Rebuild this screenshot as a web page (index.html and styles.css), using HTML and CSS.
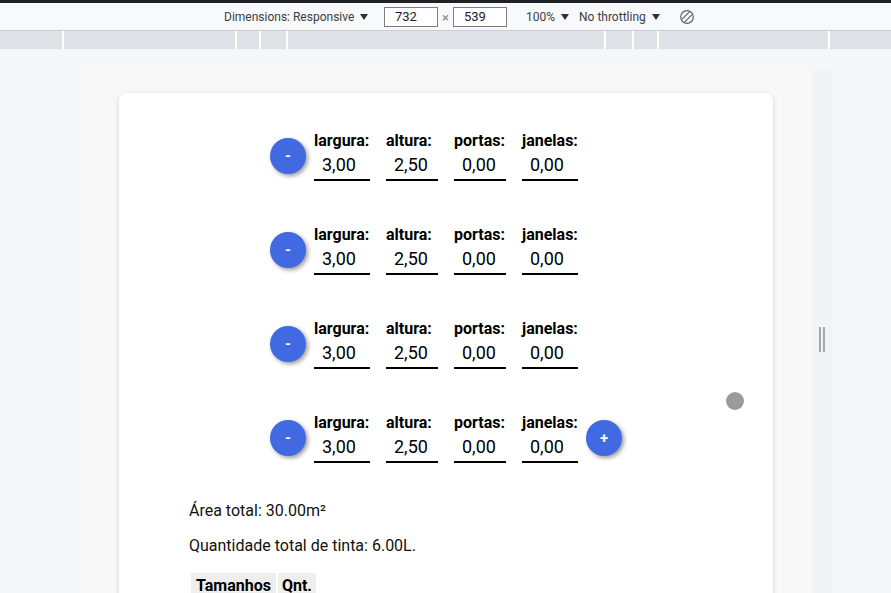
FILE: index.html
```html
<!DOCTYPE html>
<html lang="pt">
<head>
<meta charset="utf-8">
<title>Calculadora de tinta</title>
<link rel="stylesheet" href="styles.css">
</head>
<body>
<div class="topbar"></div>
<div class="toolbar">
  <span class="tb-dims">Dimensions: Responsive <i class="caret"></i></span>
  <span class="dim-box">732</span>
  <span class="times">×</span>
  <span class="dim-box">539</span>
  <span class="tb-zoom">100% <i class="caret"></i></span>
  <span class="tb-throttle">No throttling <i class="caret"></i></span>
  <svg class="rotate" width="16" height="16" viewBox="0 0 16 16">
    <circle cx="8" cy="8" r="6.3" fill="none" stroke="#5f6368" stroke-width="1.2"/>
    <line x1="3.2" y1="10.2" x2="10.2" y2="3.2" stroke="#5f6368" stroke-width="1.2"/>
    <line x1="5.8" y1="12.8" x2="12.8" y2="5.8" stroke="#5f6368" stroke-width="1.2"/>
  </svg>
</div>
<div class="ruler"><div></div><div></div><div></div><div></div><div></div><div></div><div></div><div></div><div></div></div>
<div class="stage">
  <div class="viewport">
    <div class="card">
      <div class="row">
        <button class="round">-</button>
        <div class="fields">
          <label class="field wide"><span class="lbl">largura:</span><input class="val" value="3,00"></label>
          <label class="field"><span class="lbl">altura:</span><input class="val" value="2,50"></label>
          <label class="field"><span class="lbl">portas:</span><input class="val" value="0,00"></label>
          <label class="field wide"><span class="lbl">janelas:</span><input class="val" value="0,00"></label>
        </div>
        <button class="round ghost">+</button>
      </div>
      <div class="row">
        <button class="round">-</button>
        <div class="fields">
          <label class="field wide"><span class="lbl">largura:</span><input class="val" value="3,00"></label>
          <label class="field"><span class="lbl">altura:</span><input class="val" value="2,50"></label>
          <label class="field"><span class="lbl">portas:</span><input class="val" value="0,00"></label>
          <label class="field wide"><span class="lbl">janelas:</span><input class="val" value="0,00"></label>
        </div>
        <button class="round ghost">+</button>
      </div>
      <div class="row">
        <button class="round">-</button>
        <div class="fields">
          <label class="field wide"><span class="lbl">largura:</span><input class="val" value="3,00"></label>
          <label class="field"><span class="lbl">altura:</span><input class="val" value="2,50"></label>
          <label class="field"><span class="lbl">portas:</span><input class="val" value="0,00"></label>
          <label class="field wide"><span class="lbl">janelas:</span><input class="val" value="0,00"></label>
        </div>
        <button class="round ghost">+</button>
      </div>
      <div class="row">
        <button class="round">-</button>
        <div class="fields">
          <label class="field wide"><span class="lbl">largura:</span><input class="val" value="3,00"></label>
          <label class="field"><span class="lbl">altura:</span><input class="val" value="2,50"></label>
          <label class="field"><span class="lbl">portas:</span><input class="val" value="0,00"></label>
          <label class="field wide"><span class="lbl">janelas:</span><input class="val" value="0,00"></label>
        </div>
        <button class="round">+</button>
      </div>
      <div class="summary">
        <p>Área total: 30.00m²</p>
        <p>Quantidade total de tinta: 6.00L.</p>
        <table class="sizes">
          <tr><th>Tamanhos</th><th>Qnt.</th></tr>
        </table>
      </div>
    </div>
    <div class="touch"></div>
  </div>
  <div class="handle"><span></span><span></span></div>
</div>
</body>
</html>
```
FILE: styles.css
```css
* { box-sizing: border-box; }

body {
  margin: 0;
  width: 891px;
  height: 593px;
  overflow: hidden;
  background: #f6f7f8;
  font-family: Roboto, "Liberation Sans", sans-serif;
}

.topbar {
  height: 3px;
  background: #202124;
}

.toolbar {
  height: 28px;
  background: #f8f9fa;
  border-bottom: 1px solid #cbcdd1;
  display: flex;
  align-items: center;
  padding-left: 224px;
  padding-top: 1px;
  font-size: 12px;
  color: #3c4043;
}

.caret {
  display: inline-block;
  width: 0;
  height: 0;
  border-left: 4px solid transparent;
  border-right: 4px solid transparent;
  border-top: 6px solid #303134;
  margin-left: 3px;
  vertical-align: 1px;
}

.tb-dims { width: 160px; }

.dim-box {
  width: 54px;
  height: 20px;
  border: 1px solid #7a7d82;
  background: #fff;
  padding-left: 10px;
  font-size: 13px;
  line-height: 18px;
  color: #202124;
}

.times {
  width: 15px;
  text-align: center;
  color: #80868b;
  font-size: 13px;
}

.tb-zoom { margin-left: 19px; width: 53px; }
.tb-throttle { width: 100px; }

.rotate { display: block; }

.ruler {
  height: 18px;
  display: grid;
  grid-template-columns: 62px 171px 22px 25px 316px 26px 23px 169px 1fr;
  column-gap: 2px;
  background: #fff;
}
.ruler div { background: #dee1e6; }

.stage {
  display: flex;
  padding-left: 80px;
  padding-top: 21px;
}

.viewport {
  position: relative;
  width: 732px;
  height: 539px;
  flex: none;
  overflow: hidden;
  background: #f8f8f8;
}

.card {
  margin: 23px 39px 0;
  background: #fff;
  border-radius: 8px;
  box-shadow: 0 1px 5px rgba(0, 0, 0, 0.14);
  padding-top: 16px;
  min-height: 700px;
}

.row {
  display: flex;
  justify-content: center;
  align-items: center;
  gap: 8px;
  padding: 22px 0;
}

.fields {
  display: flex;
  gap: 16px;
}

.field {
  display: flex;
  flex-direction: column;
  width: 52px;
}
.field.wide { width: 56px; }

.lbl {
  font-weight: 700;
  font-size: 16px;
  line-height: 19px;
  color: #000;
  white-space: nowrap;
}

.val {
  width: 100%;
  height: 31px;
  border: 0;
  border-bottom: 2px solid #000;
  padding: 0 0 0 8px;
  margin: 0;
  font-family: Roboto, "Liberation Sans", sans-serif;
  font-size: 18px;
  color: #000;
  background: transparent;
  outline: none;
}

.round {
  width: 36px;
  height: 36px;
  flex: none;
  border: 0;
  border-radius: 50%;
  background: #4169e1;
  color: #fff;
  font-family: Roboto, "Liberation Sans", sans-serif;
  font-weight: 700;
  font-size: 15px;
  padding: 0;
  box-shadow: 2px 2px 4px rgba(0, 0, 0, 0.4);
}

.round.ghost { visibility: hidden; }

.summary {
  padding-left: 70px;
  font-size: 16px;
  color: #111;
}

.summary p {
  margin: 16px 0;
  line-height: 19px;
}

.sizes {
  border-spacing: 2px;
}

.sizes th {
  background: #eeeeee;
  padding: 3px 5px 3px 5px;
  font-size: 16px;
  font-weight: 700;
  text-align: left;
  color: #000;
}

.sizes th + th {
  padding-left: 4px;
  padding-right: 4px;
}

.touch {
  position: absolute;
  left: 646px;
  top: 322px;
  width: 18px;
  height: 18px;
  border-radius: 50%;
  background: #9a9a9a;
}

.handle {
  width: 20px;
  height: 539px;
  flex: none;
  background: #f1f3f4;
  display: flex;
  justify-content: center;
  align-items: center;
  gap: 2px;
}

.handle span {
  width: 2px;
  height: 25px;
  background: #a9a9a9;
}
```
